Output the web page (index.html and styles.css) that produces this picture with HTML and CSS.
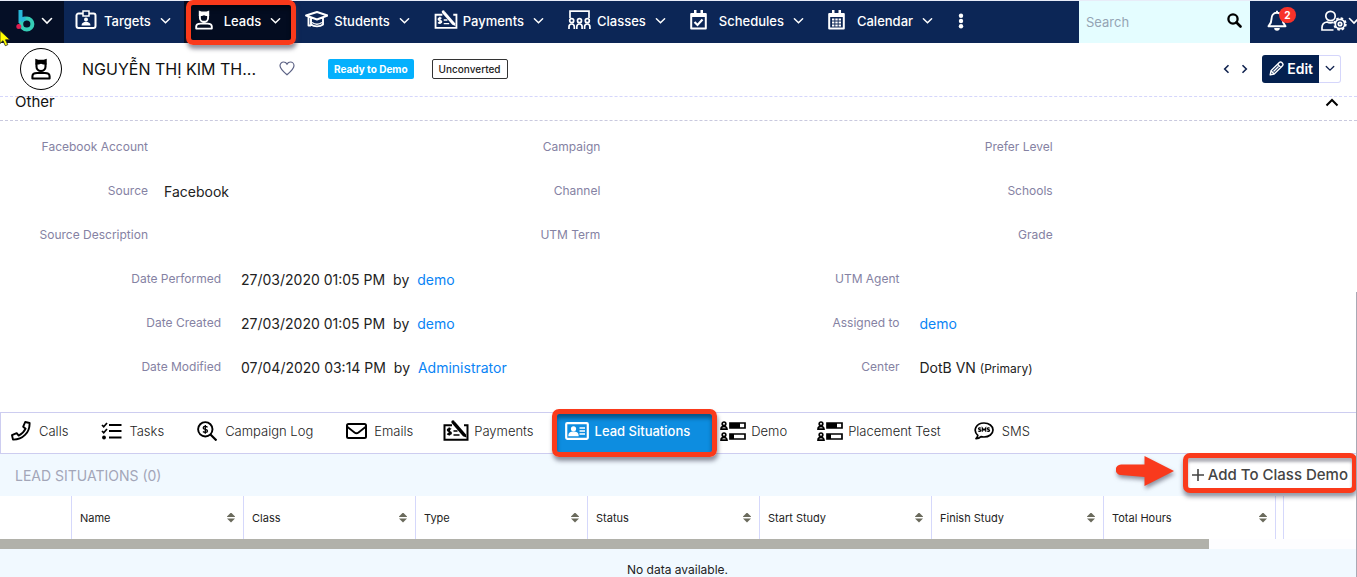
FILE: index.html
```html
<!DOCTYPE html>
<html lang="en">
<head>
<meta charset="utf-8">
<title>Leads</title>
<link rel="stylesheet" href="styles.css">
</head>
<body>
<svg class="defs" aria-hidden="true">
  <symbol id="chev" viewBox="0 0 12 8"><path d="M1.500 1.500 6 6l4.500-4.500" fill="none" stroke="currentColor" stroke-width="1.600" stroke-linecap="round"/></symbol>
  <symbol id="lead" viewBox="0 0 18 20"><path d="M3.800.6 6.500 1.600h5L14.200.6V6H11L9 5.300 7 6H3.800z" fill="currentColor"/><path d="M4.900 5v3a4.100 3.800 0 0 0 8.200 0V5M1.200 18.600v-2c0-2.200 1.800-3 4.300-3h7c2.500 0 4.300.8 4.300 3v2z" fill="none" stroke="currentColor" stroke-width="1.900" stroke-linejoin="round"/></symbol>
  <symbol id="pay" viewBox="0 0 26 22"><path d="M9 5.200H1.500v14.500h23V5.200H21" fill="none" stroke="currentColor" stroke-width="2"/><path d="m9 3.500 3-1.700 11 12.700.5 3-3.500-1.200z" fill="currentColor"/><circle cx="10" cy="2" r="1.700" fill="currentColor"/><path d="M8 9.300c-1-1-3.500-.7-3.500.8 0 1.700 3.700.9 3.700 2.800 0 1.500-2.700 1.900-3.900.7M6.300 7.500v8M10.500 11h4M10.500 15h6" fill="none" stroke="currentColor" stroke-width="1.600"/></symbol>
  <symbol id="rows" viewBox="0 0 26 20"><g fill="none" stroke="currentColor" stroke-width="1.700"><circle cx="4" cy="2.800" r="1.800"/><path d="M1 8.200C1 4.500 7 4.500 7 8.200z"/><circle cx="4" cy="13.800" r="1.800"/><path d="M1 19.200c0-3.700 6-3.700 6 0z"/><path d="M10 2h15v5H10zM10 13h15v5H10z"/></g><path d="M10 2h10v5H10zM10 13h4v5h-4z" fill="currentColor"/></symbol>
</svg>

<header class="nav">
  <button class="brand" aria-label="Home">
    <svg class="logo" viewBox="0 0 20 24"><path d="M4.500 1v13" stroke="#28b7d8" stroke-width="4"/><circle cx="10.800" cy="15" r="5.600" fill="none" stroke="#35cdb6" stroke-width="4"/><path d="M4.500 12a6 6 0 0 1 5-2.500" fill="none" stroke="#28b7d8" stroke-width="4"/><circle cx="2.800" cy="17.500" r="2.500" fill="#e01d50"/></svg>
    <svg class="chev"><use href="#chev"/></svg>
  </button>
  <nav class="modules">
    <button class="module"><span class="micon"><svg width="22" height="19" viewBox="0 0 22 19"><g fill="none" stroke="currentColor" stroke-width="2"><path d="M8 3.500H3.500a2 2 0 0 0-2 2V16a2 2 0 0 0 2 2h15a2 2 0 0 0 2-2V5.500a2 2 0 0 0-2-2H14"/><path d="M8 1h6v5H8z" stroke-width="1.500"/></g><circle cx="11" cy="9.500" r="2" fill="currentColor"/><path d="M6.500 15.500c0-5 9-5 9 0z" fill="currentColor"/></svg></span>Targets<svg class="chev"><use href="#chev"/></svg></button>
    <button class="module active"><span class="micon"><svg width="18" height="20"><use href="#lead"/></svg></span>Leads<svg class="chev"><use href="#chev"/></svg><span class="mark mark-module"></span></button>
    <button class="module"><span class="micon"><svg width="23" height="17" viewBox="0 0 23 17"><path d="M1 4.500 12 1l10.500 3.500L12 8.500zM6 7v6.500c3 2.500 9 2.500 12 0V7M3.500 6v8.500H6" fill="none" stroke="currentColor" stroke-width="1.900" stroke-linejoin="round"/><path d="M7 11.500c3 2 7 2 10 0" fill="none" stroke="currentColor" stroke-width="1.500"/></svg></span>Students<svg class="chev"><use href="#chev"/></svg></button>
    <button class="module"><span class="micon"><svg width="24" height="20"><use href="#pay"/></svg></span>Payments<svg class="chev"><use href="#chev"/></svg></button>
    <button class="module"><span class="micon"><svg width="23" height="20" viewBox="0 0 23 20"><g fill="none" stroke="currentColor" stroke-width="1.700"><path d="M2 8V1.200h19V8"/><circle cx="3.700" cy="10.700" r="2"/><circle cx="11.500" cy="10.700" r="2"/><circle cx="19.300" cy="10.700" r="2"/><path d="M1 19v-2.300c0-3.600 5.300-3.600 5.300 0V19M8.800 19v-2.300c0-3.600 5.300-3.600 5.300 0V19M16.600 19v-2.300c0-3.600 5.300-3.600 5.300 0V19"/></g></svg></span>Classes<svg class="chev"><use href="#chev"/></svg></button>
    <button class="module"><span class="micon"><svg width="17" height="20" viewBox="0 0 17 20"><path d="M1.200 4h14.600v14.500H1.200z" fill="none" stroke="currentColor" stroke-width="2" stroke-linejoin="round"/><path d="M1 3h15v4H1zM4 0h2.500v4H4zM10.500 0H13v4h-2.500z" fill="currentColor"/><path d="m4.500 12 3 3 5-5.500" fill="none" stroke="currentColor" stroke-width="2.200"/></svg></span>Schedules<svg class="chev"><use href="#chev"/></svg></button>
    <button class="module"><span class="micon"><svg width="17" height="20" viewBox="0 0 17 20"><path d="M1.200 4h14.600v14.500H1.200z" fill="none" stroke="currentColor" stroke-width="2" stroke-linejoin="round"/><path d="M1 3h15v4H1zM4 0h2.500v4H4zM10.500 0H13v4h-2.500z" fill="currentColor"/><path d="M4 9.500h9M4 12.500h9M4 15.500h9" stroke="currentColor" stroke-width="2" stroke-dasharray="2.400 .9"/></svg></span>Calendar<svg class="chev"><use href="#chev"/></svg></button>
    <button class="more" aria-label="More modules"><svg width="6" height="16" viewBox="0 0 6 16" fill="currentColor"><circle cx="3" cy="2.700" r="2.200"/><circle cx="3" cy="8" r="2.200"/><circle cx="3" cy="13.300" r="2.200"/></svg></button>
  </nav>
  <form class="search">
    <input type="text" placeholder="Search" aria-label="Search">
    <button type="button" aria-label="Run search"><svg width="15" height="15" viewBox="0 0 15 15"><circle cx="6" cy="6" r="4.600" fill="none" stroke="#000" stroke-width="2.300"/><path d="m9.500 9.500 4 4" stroke="#000" stroke-width="2.600" stroke-linecap="round"/></svg></button>
  </form>
  <div class="tools">
    <button class="bell" aria-label="Notifications"><svg width="20" height="22" viewBox="0 0 20 22"><path d="M10 2.800C6 2.800 4.500 6 4.500 9c0 4-1.500 5.500-3 7.200h17c-1.500-1.700-3-3.200-3-7.200 0-3-1.500-6.200-5.500-6.200zM10 .8v2" fill="none" stroke="currentColor" stroke-width="1.900" stroke-linejoin="round"/><path d="M7.200 18h5.600a2.800 2.800 0 0 1-5.600 0z" fill="currentColor"/></svg><span class="count">2</span></button>
    <button class="user" aria-label="User menu"><svg width="27" height="22" viewBox="0 0 27 22"><g fill="none" stroke="currentColor" stroke-width="1.700"><circle cx="9.500" cy="6" r="4.700"/><path d="M12.500 20H1v-2.500c0-3.500 2-5 5-5.500 2 1 4.500 1 6.500.3"/><circle cx="19" cy="14" r="4.700"/><circle cx="19" cy="14" r="1.700"/></g><circle cx="19" cy="14" r="5.800" fill="none" stroke="currentColor" stroke-width="1.800" stroke-dasharray="2.500 2.050"/></svg><svg class="chev"><use href="#chev"/></svg></button>
  </div>
  <svg class="cursor" width="10" height="17" viewBox="0 0 10 17"><path d="M0 .5v13l3-2.800 2.300 5 2.500-1-2.300-4.900H10z" fill="#ff0" stroke="#222" stroke-width=".8"/></svg>
</header>

<main>
  <section class="record">
    <span class="avatar"><svg width="20" height="22"><use href="#lead"/></svg></span>
    <h1>NGUYỄN THỊ KIM TH...</h1>
    <button class="fav" aria-label="Favorite"><svg width="16" height="15" viewBox="0 0 16 15"><path d="M8 13.800C3.500 10 1 7.700 1 4.800 1 2.700 2.600 1 4.600 1 6 1 7.300 1.800 8 3.100 8.700 1.800 10 1 11.400 1 13.400 1 15 2.700 15 4.800c0 2.900-2.500 5.200-7 9z" fill="none" stroke="#5c6285" stroke-width="1.200"/></svg></button>
    <span class="tag ready">Ready to Demo</span>
    <span class="tag plain">Unconverted</span>
    <div class="actions">
      <button class="step" aria-label="Previous"><svg width="7" height="10" viewBox="0 0 7 10"><path d="M5.500 1.200 1.700 5l3.800 3.800" fill="none" stroke="currentColor" stroke-width="1.600"/></svg></button>
      <button class="step" aria-label="Next"><svg width="7" height="10" viewBox="0 0 7 10"><path d="M1.500 1.200 5.300 5 1.500 8.800" fill="none" stroke="currentColor" stroke-width="1.600"/></svg></button>
      <div class="split">
        <button class="edit"><svg width="15" height="15" viewBox="0 0 15 15"><path d="m1.200 13.800.8-4L10.300 1.500c.9-.8 1.800-.6 2.500.1l.6.600c.7.7.9 1.600.1 2.500L5.200 13zM8.600 3.200l3.200 3.200M2 9.800 5.200 13M4.500 10.500l5-5" fill="none" stroke="currentColor" stroke-width="1.400" stroke-linejoin="round"/></svg>Edit</button>
        <button class="drop" aria-label="More actions"><svg width="10" height="7"><use href="#chev"/></svg></button>
      </div>
    </div>
  </section>

  <section class="group">
    <h2>Other</h2>
    <button aria-label="Collapse"><svg width="14" height="9" viewBox="0 0 14 9"><path d="m1.500 7.500 5.500-5.500 5.500 5.500" fill="none" stroke="#000" stroke-width="2"/></svg></button>
  </section>

  <dl class="fields thirds">
    <div><dt>Facebook Account</dt><dd></dd></div><div><dt>Campaign</dt><dd></dd></div><div><dt>Prefer Level</dt><dd></dd></div>
    <div><dt>Source</dt><dd>Facebook</dd></div><div><dt>Channel</dt><dd></dd></div><div><dt>Schools</dt><dd></dd></div>
    <div><dt>Source Description</dt><dd></dd></div><div><dt>UTM Term</dt><dd></dd></div><div><dt>Grade</dt><dd></dd></div>
  </dl>
  <dl class="fields halves">
    <div><dt>Date Performed</dt><dd>27/03/2020 01:05 PM <span>by</span> <a href="#">demo</a></dd></div><div><dt>UTM Agent</dt><dd></dd></div>
    <div><dt>Date Created</dt><dd>27/03/2020 01:05 PM <span>by</span> <a href="#">demo</a></dd></div><div><dt>Assigned to</dt><dd><a href="#">demo</a></dd></div>
    <div><dt>Date Modified</dt><dd>07/04/2020 03:14 PM <span>by</span> <a href="#">Administrator</a></dd></div><div><dt>Center</dt><dd>DotB VN <small>(Primary)</small></dd></div>
  </dl>

  <nav class="tabs">
    <button><span class="ticon"><svg width="20" height="20" viewBox="0 0 20 20"><path d="M14.200 1 18.600 2c.3 9.500-7 16.800-16.600 16.600L1 14.200l4.700-2 2 2.400c3.200-1.500 5.400-3.700 6.900-6.900l-2.400-2z" fill="none" stroke="currentColor" stroke-width="1.900" stroke-linejoin="round"/></svg></span>Calls</button>
    <button><span class="ticon"><svg width="21" height="18" viewBox="0 0 21 18"><path d="m1 3 1.700 1.700L6 1M1 9l1.700 1.700L6 7" fill="none" stroke="currentColor" stroke-width="1.700"/><circle cx="3" cy="15.500" r="1.900" fill="currentColor"/><path d="M8 3h12.500M8 9h12.500M8 15.500h12.500" stroke="currentColor" stroke-width="2"/></svg></span>Tasks</button>
    <button><span class="ticon"><svg width="20" height="20" viewBox="0 0 20 20"><circle cx="8.300" cy="8.300" r="7.200" fill="none" stroke="currentColor" stroke-width="1.900"/><path d="m13.500 13.500 6 6" stroke="currentColor" stroke-width="2.200"/><path d="M10.500 6.300C9.500 5.100 6.200 5.100 6.200 6.900c0 2 4.300.9 4.300 3 0 1.800-3.400 1.900-4.500.6M8.300 4v8.800" fill="none" stroke="currentColor" stroke-width="1.300"/></svg></span>Campaign Log</button>
    <button><span class="ticon"><svg width="21" height="16" viewBox="0 0 21 16"><rect x="1" y="1" width="19" height="14" rx="1.500" fill="none" stroke="currentColor" stroke-width="2"/><path d="m1.500 4 7 5.500c1.300 1 2.700 1 4 0l7-5.500" fill="none" stroke="currentColor" stroke-width="1.800"/></svg></span>Emails</button>
    <button><span class="ticon"><svg width="26" height="22"><use href="#pay"/></svg></span>Payments</button>
    <button class="current"><span class="ticon"><svg width="24" height="18" viewBox="0 0 24 18"><rect x="1.200" y="1.200" width="21.600" height="15.600" rx="1" fill="none" stroke="currentColor" stroke-width="2.200"/><circle cx="8.500" cy="6.800" r="2.600" fill="currentColor"/><path d="M4 13.500c0-4.500 9-4.500 9 0zM14.500 6h5.500M14.500 9h5.500M14.500 12h5.500" fill="currentColor" stroke="currentColor" stroke-width="1.300"/></svg></span>Lead Situations<span class="mark mark-tab"></span></button>
    <button><span class="ticon"><svg width="26" height="20"><use href="#rows"/></svg></span>Demo</button>
    <button><span class="ticon"><svg width="26" height="20"><use href="#rows"/></svg></span>Placement Test</button>
    <button><span class="ticon"><svg width="20" height="18" viewBox="0 0 20 18"><path d="M3.800 13.300C-1.500 8.500 2 1 10 1c5 0 9 3 9 7s-4 7-9 7c-1 0-2-.1-3-.4-1.500 1.400-3 2-5 2.100 1-1 1.600-2 1.800-3.400z" fill="none" stroke="currentColor" stroke-width="1.700" stroke-linejoin="round"/><path d="M6.800 6.300c-.8-.7-2.300-.4-2.300.5 0 1 2.300.6 2.300 1.700 0 1-1.700 1.300-2.500.4M8.300 9.700V6L10 8.200 11.700 6v3.700M15.600 6.300c-.8-.7-2.300-.4-2.300.5 0 1 2.300.6 2.300 1.700 0 1-1.700 1.300-2.500.4" fill="none" stroke="currentColor" stroke-width="1.200"/></svg></span>SMS</button>
  </nav>

  <section class="subpanel">
    <div class="subhead">
      <h3>LEAD SITUATIONS (0)</h3>
      <svg class="arrow" width="58" height="34" viewBox="0 0 58 34"><path d="M5 8.500h23.500V0L58 15 28.500 30v-9L5 19a5.200 5.200 0 0 1 0-10.500z" fill="#f93a1d"/></svg>
      <button class="add"><svg width="12" height="12" viewBox="0 0 12 12"><path d="M6 0v12M0 6h12" stroke="currentColor" stroke-width="1.600"/></svg>Add To Class Demo</button>
    </div>
    <table>
      <thead><tr>
        <th class="pick"></th>
        <th><span>Name<i></i></span></th><th><span>Class<i></i></span></th><th><span>Type<i></i></span></th><th><span>Status<i></i></span></th><th><span>Start Study<i></i></span></th><th><span>Finish Study<i></i></span></th><th><span>Total Hours<i></i></span></th>
        <th class="slim"></th><th class="rest"></th>
      </tr></thead>
    </table>
    <div class="hscroll"><div class="hthumb"></div></div>
    <p class="empty">No data available.</p>
  </section>
  <span class="vthumb"></span>
</main>
</body>
</html>
```

FILE: styles.css
```css
* { box-sizing: border-box; }
body { margin: 0; background: #fff; color: #222; font: 14px/20px Inter, "Liberation Sans", sans-serif; }
button { border: 0; padding: 0; margin: 0; background: none; color: inherit; font: inherit; white-space: nowrap; }
svg { display: block; flex: none; }
h1, h2, h3, dl, dd, p { margin: 0; font-weight: 400; }
a { color: #0a84f5; text-decoration: none; }
.defs { position: absolute; width: 0; height: 0; }
.chev { width: 12px; height: 8px; }

.nav { position: relative; display: flex; height: 43px; border-top: 1px solid #e8ecf8; background: #0c2656; color: #fff; }
.brand { display: flex; align-items: center; gap: 5px; width: 64px; padding: 0 0 3px 16px; background: #050f26; }
.logo { width: 20px; height: 24px; }
.modules { display: flex; }
.module { position: relative; display: flex; align-items: center; padding: 0 13px 2px 11px; font-size: 13px; font-weight: 500; }
.module .chev { width: 11px; margin-left: 9px; }
.module.active { background: #030c20; }
.micon { width: 29px; padding-bottom: 3px; }
.more { padding: 0 12px 2px; }
.search { display: flex; width: 171px; margin-left: auto; background: #e4fdff; }
.search input { flex: 1; min-width: 0; border: 0; padding: 0 0 1px 7px; background: transparent; font: 13px Inter, sans-serif; outline: 0; }
.search input::placeholder { color: #94a4b4; opacity: 1; }
.search button { padding: 0 8px 3px 0; }
.tools { display: flex; width: 107px; overflow: hidden; }
.tools button { position: relative; display: flex; align-items: center; padding-bottom: 3px; }
.bell { margin-left: 17px; }
.bell .count { position: absolute; left: 12px; top: 6px; width: 17px; border-radius: 8px; background: #f8322a; font-size: 10px; font-weight: 700; line-height: 16px; text-align: center; }
.user { margin-left: 34px; }
.cursor { position: absolute; left: 0; top: 29px; }

.mark { position: absolute; border: 5px solid #fa3a1b; border-radius: 7px; box-shadow: 1px 4px 4px rgba(60, 60, 80, .55), inset 0 4px 4px rgba(0, 0, 0, .4); pointer-events: none; z-index: 2; }
.mark-module { inset: -1px -2px -2px 2px; }

.record { display: flex; align-items: center; height: 54px; padding: 0 16px 2px 20px; border-bottom: 1px dashed #d5d6fb; }
.avatar { display: grid; place-items: center; width: 42px; height: 42px; border: 1px solid #000; border-radius: 50%; color: #000; }
h1 { width: 176px; margin-left: 20px; color: #111; font-size: 16px; white-space: nowrap; }
.fav { margin-left: 21px; }
.tag { height: 20px; padding: 0 6px; border-radius: 2px; font-size: 10px; line-height: 20px; }
.ready { margin-left: 33px; background: #04b0fd; color: #fff; font-weight: 700; }
.plain { margin-left: 18px; border: 1px solid #333; line-height: 18px; font-weight: 500; }
.actions { display: flex; align-items: center; margin-left: auto; color: #10224f; }
.step { padding: 6px 0 6px 11px; }
.split { display: flex; height: 28px; margin-left: 14px; }
.edit { display: flex; align-items: center; gap: 3px; padding: 0 6px 0 7px; border-radius: 3px 0 0 3px; background: #04204f; color: #fff; font-weight: 600; }
.drop { width: 22px; padding-left: 6px; border: 1px solid #d5d6fb; border-left: 0; border-radius: 0 3px 3px 0; }

.group { display: flex; align-items: center; justify-content: space-between; height: 24px; padding: 0 18px 13px 15px; border-bottom: 1px dashed #c9c9de; color: #111; }
h2 { font-size: 15px; line-height: 10px; }

.fields { display: grid; grid-auto-rows: 44px; }
.fields > div { display: flex; align-items: center; }
.fields dt { width: 148px; text-align: right; font-size: 12px; color: #8582a3; line-height: 20px; }
.fields dd { padding: 2px 0 0 16px; white-space: nowrap; }
.thirds { grid-template-columns: repeat(3, 1fr); padding-top: 4px; }
.halves { grid-template-columns: repeat(2, 1fr); padding-bottom: 23px; }
.halves dt { width: 221px; }
.halves dd { padding-left: 20px; }
.halves span { margin: 0 4px; }
small { font-size: 12px; }

.tabs { display: flex; height: 42px; padding-left: 6px; border: 1px solid #cdcdf0; color: #222; }
.tabs button { position: relative; display: flex; align-items: center; gap: 4px; margin-right: 29px; font-size: 13px; padding-bottom: 4px; font-weight: 300; }
.ticon { display: grid; place-items: center; width: 28px; color: #000; }
.tabs .current { color: #fff; font-weight: 500; z-index: 1; }
.current::before { content: ""; position: absolute; inset: 0 -23px 0 -7px; background: #0d8de0; z-index: -1; }
.current .ticon { color: #fff; }
.tabs .mark-tab { inset: -4px -27px -4px -11px; }

.subpanel { background: #f1f9ff; }
.subhead { display: flex; align-items: center; height: 42px; padding: 0 0 4px 15px; }
h3 { color: #a3a6b8; font-size: 14px; padding-top: 6px; }
.arrow { margin-left: auto; filter: drop-shadow(1px 3px 2px rgba(60, 60, 80, .55)); }
.add { display: flex; align-items: center; gap: 4px; height: 40px; margin-left: 9px; padding: 4px 4px 0; border: 5px solid #fa3a1b; border-radius: 7px; background: #fff; box-shadow: 0 4px 4px rgba(60, 60, 80, .5), inset 0 4px 3px rgba(60, 60, 80, .4); color: #444; font-size: 15px; font-weight: 500; }
table { width: 100%; border-collapse: separate; border-spacing: 0; table-layout: fixed; background: #fff; }
th { width: 172px; height: 43px; padding: 0 8px; border-right: 1px solid #d5d8fb; font-size: 11px; font-weight: 400; text-align: left; }
th.pick { width: 72px; }
th.slim { width: 8px; padding: 0; }
th.rest { width: auto; border: 0; }
th span { display: flex; align-items: center; justify-content: space-between; }
th i { width: 8px; height: 10px; background: #6a6a5c; clip-path: polygon(50% 0, 100% 40%, 100% 45%, 0 45%, 0 60%, 100% 60%, 50% 100%, 0 60%, 0 40%); }
.hscroll { height: 10px; background: #fdfdff; }
.hthumb { width: 89.1%; height: 10px; background: #b1b1aa; }
.empty { padding: 11px 2px 0 0; height: 28px; font-size: 12px; text-align: center; overflow: hidden; }
.vthumb { position: absolute; right: 0; top: 292px; bottom: 0; width: 1px; background: #a9a9b5; }
```
